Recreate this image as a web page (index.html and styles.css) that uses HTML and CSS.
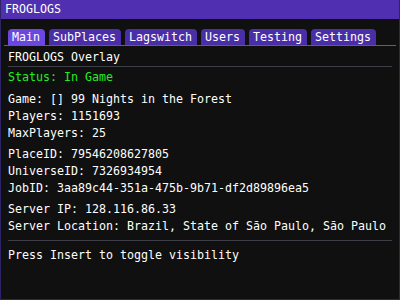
FILE: index.html
```html
<!DOCTYPE html>
<html>
<head>
<meta charset="utf-8">
<link rel="stylesheet" href="styles.css">
</head>
<body>
<div class="window">
  <div class="titlebar">FROGLOGS</div>
  <div class="content">
    <div class="tabbar">
      <div class="tab active">Main</div>
      <div class="tab">SubPlaces</div>
      <div class="tab">Lagswitch</div>
      <div class="tab">Users</div>
      <div class="tab">Testing</div>
      <div class="tab">Settings</div>
    </div>
    <div class="row heading">FROGLOGS Overlay</div>
    <div class="sep sep-top"></div>
    <div class="row status">Status: In Game</div>
    <div class="row">Game: [] 99 Nights in the Forest</div>
    <div class="row">Players: 1151693</div>
    <div class="row group-end">MaxPlayers: 25</div>
    <div class="row">PlaceID: 79546208627805</div>
    <div class="row">UniverseID: 7326934954</div>
    <div class="row group-end">JobID: 3aa89c44-351a-475b-9b71-df2d89896ea5</div>
    <div class="row">Server IP: 128.116.86.33</div>
    <div class="row last">Server Location: Brazil, State of São Paulo, São Paulo</div>
    <div class="sep sep-bottom"></div>
    <div class="row">Press Insert to toggle visibility</div>
  </div>
</div>
</body>
</html>
```
FILE: styles.css
```css
html, body {
  margin: 0;
  padding: 0;
  background: #101010;
}
.window {
  box-sizing: border-box;
  width: 400px;
  height: 300px;
  background: #101010;
  border: 1px solid #2d2468;
  border-top: none;
  font-family: "DejaVu Sans Mono", "Liberation Mono", monospace;
  font-size: 11.63px;
  color: #ffffff;
  overflow: hidden;
}
.titlebar {
  margin: 0 -1px;
  height: 19px;
  line-height: 19px;
  padding-left: 5px;
  background: #5030b0;
  color: #ffffff;
  white-space: pre;
}
.content {
  padding: 10px 7px 0 7px;
}
.tabbar {
  display: flex;
  gap: 4px;
  margin: 0 -4px;
  padding-left: 4px;
  border-bottom: 1px solid #6a48e0;
}
.tab {
  height: 16px;
  line-height: 17px;
  padding: 0 5px 0 4px;
  background: #4a2ea8;
  border-radius: 4px 4px 0 0;
  white-space: pre;
}
.tab.active {
  background: #6a48e0;
}
.row {
  height: 13px;
  line-height: 13px;
  margin-bottom: 4px;
  white-space: pre;
}
.heading {
  margin-top: 5px;
  margin-bottom: 2px;
}
.sep {
  height: 1px;
  background: #3e3e48;
}
.sep-top {
  margin-bottom: 4px;
}
.status {
  color: #22ee22;
  margin-bottom: 9px;
}
.group-end {
  margin-bottom: 8px;
}
.last {
  margin-bottom: 7px;
}
.sep-bottom {
  margin-bottom: 8px;
}
```
